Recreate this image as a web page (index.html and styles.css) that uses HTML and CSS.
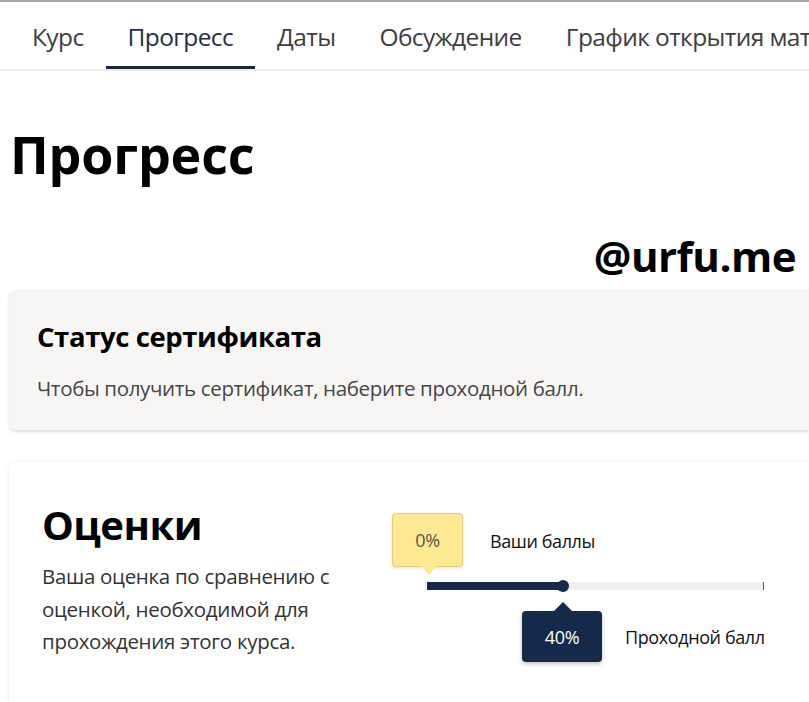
FILE: index.html
```html
<!DOCTYPE html>
<html lang="ru">
<head>
<meta charset="utf-8">
<link rel="stylesheet" href="styles.css">
</head>
<body>
<div class="topline"></div>
<nav class="tabs">
  <a class="tab">Курс</a>
  <a class="tab active">Прогресс</a>
  <a class="tab">Даты</a>
  <a class="tab">Обсуждение</a>
  <a class="tab">График открытия материалов</a>
</nav>
<main class="main">
  <h1 class="title">Прогресс</h1>
  <div class="watermark">@urfu.me</div>
  <section class="card cert">
    <h2 class="cert-title">Статус сертификата</h2>
    <p class="cert-text">Чтобы получить сертификат, наберите проходной балл.</p>
  </section>
  <section class="card grades">
    <div class="grades-info">
      <h2 class="grades-title">Оценки</h2>
      <p class="grades-text">Ваша оценка по сравнению с оценкой, необходимой для прохождения этого курса.</p>
    </div>
    <div class="chart">
      <div class="chart-top">
        <div class="tip tip-yellow">0%</div>
        <span class="chart-label">Ваши баллы</span>
      </div>
      <div class="bar">
        <div class="bar-fill"></div>
        <div class="bar-dot"></div>
        <div class="bar-tick"></div>
      </div>
      <div class="chart-bottom">
        <div class="tip tip-dark">40%</div>
        <span class="chart-label">Проходной балл</span>
      </div>
    </div>
  </section>
</main>
</body>
</html>
```
FILE: styles.css
```css
* { box-sizing: border-box; }
html, body { margin: 0; padding: 0; background: #fff; overflow: hidden; }
body {
  font-family: "Open Sans", "Noto Sans", sans-serif;
  color: #000;
  width: 809px;
  height: 702px;
}
.topline { height: 2px; background: #a8a8a8; }
.tabs {
  display: flex;
  height: 69px;
  padding-left: 10px;
  border-bottom: 2px solid #ececec;
  white-space: nowrap;
  overflow: hidden;
}
.tab {
  display: flex;
  align-items: center;
  padding: 4px 22px 0;
  font-size: 24.5px;
  letter-spacing: -0.6px;
  color: #3d3d3d;
  border-bottom: 5px solid transparent;
  height: 69px;
}
.tab.active { border-bottom-color: #15283e; color: #233043; }
.main { padding: 0 0 0 9px; }
.title {
  margin: 50px 0 0 1px;
  font-size: 52px;
  font-weight: 700;
  letter-spacing: -0.2px;
  line-height: 66px;
}
.watermark {
  text-align: right;
  margin: 47px 13px 0 0;
  font-size: 42px;
  font-weight: 700;
  letter-spacing: -0.5px;
  line-height: 44px;
  height: 40px;
}
.card {
  border-radius: 7px 0 0 7px;
}
.cert {
  margin-top: 15px;
  background: #f7f6f4;
  height: 141px;
  padding: 28px 28px 0;
  box-shadow: 0 2px 3px rgba(0,0,0,0.12);
}
.cert-title {
  margin: 0;
  font-size: 27.5px;
  font-weight: 700;
  letter-spacing: -0.4px;
  line-height: 40px;
}
.cert-text {
  margin: 17px 0 0;
  font-size: 20.5px;
  letter-spacing: -0.35px;
  color: #454545;
}
.grades {
  margin-top: 32px;
  display: flex;
  background: #fff;
  height: 260px;
  padding: 38px 0 0 33px;
  box-shadow: 0 0 4px rgba(0,0,0,0.08);
}
.grades-info { width: 330px; }
.grades-title {
  margin: 0;
  font-size: 40px;
  font-weight: 700;
  line-height: 50px;
  letter-spacing: -0.5px;
}
.grades-text {
  margin: 10px 0 0;
  font-size: 20.5px;
  line-height: 32.5px;
  color: #333;
  letter-spacing: -0.3px;
  width: 305px;
}
.chart {
  padding-top: 13px;
  margin-left: 20px;
  width: 374px;
}
.chart-top, .chart-bottom {
  display: flex;
  align-items: center;
}
.chart-top { gap: 27px; }
.chart-bottom { gap: 23px; padding-left: 130px; }
.tip {
  position: relative;
  display: flex;
  align-items: center;
  justify-content: center;
  border-radius: 4px;
  font-size: 18px;
  letter-spacing: -0.4px;
}
.tip-yellow {
  width: 71px;
  height: 54px;
  background: #fde992;
  border: 1px solid #e1cd7a;
  color: #555;
  box-shadow: 0 1px 3px rgba(0,0,0,0.12);
}
.tip-yellow::after {
  content: "";
  position: absolute;
  left: 28px;
  bottom: -9px;
  border-left: 8px solid transparent;
  border-right: 8px solid transparent;
  border-top: 9px solid #fde992;
}
.tip-dark {
  width: 80px;
  height: 51px;
  background: #15294a;
  color: #fff;
  box-shadow: 0 2px 4px rgba(0,0,0,0.25);
}
.tip-dark::before {
  content: "";
  position: absolute;
  left: 32px;
  top: -9px;
  border-left: 9px solid transparent;
  border-right: 9px solid transparent;
  border-bottom: 9px solid #15294a;
}
.chart-label { font-size: 18px; color: #111; letter-spacing: -0.4px; }
.chart-top .chart-label { margin-top: 2px; }
.bar {
  position: relative;
  margin: 15px 0 0 35px;
  width: 337px;
  height: 8px;
  background: #efeded;
  margin-bottom: 21px;
}
.bar-fill {
  width: 136px;
  height: 8px;
  background: #15294a;
}
.bar-dot {
  position: absolute;
  left: 130px;
  top: -2px;
  width: 12px;
  height: 12px;
  border-radius: 50%;
  background: #15294a;
}
.bar-tick {
  position: absolute;
  right: 0;
  top: 0;
  width: 1px;
  height: 8px;
  background: #555;
}
```
